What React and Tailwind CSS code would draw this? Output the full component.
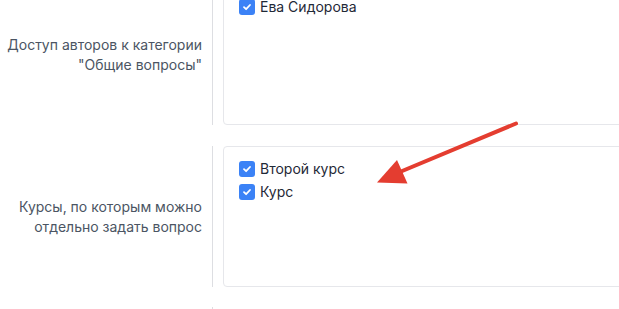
import React from "react";

function Check({ label }) {
  return (
    <div className="flex h-[23px] items-center gap-[5px]">
      <span className="flex h-4 w-4 items-center justify-center rounded-[3px] bg-[#3b82f6]">
        <svg width="10" height="10" viewBox="0 0 10 10" fill="none">
          <path d="M2 5.2 L4.1 7.2 L8 3" stroke="white" strokeWidth="1.8" strokeLinecap="round" strokeLinejoin="round" />
        </svg>
      </span>
      <span className="text-[14px] leading-5 text-[#1f2937]">{label}</span>
    </div>
  );
}

function Row({ label, items }) {
  return (
    <div className="flex h-[141px]">
      <div className="flex w-[212px] shrink-0 items-center justify-end pr-[10px] text-right text-[14px] leading-5 text-[#4b5563]">
        <div>{label}</div>
      </div>
      <div className="flex-1 border-l border-[#dddee2] pl-[10px]">
        <div className="h-full w-[500px] rounded-[4px] border border-[#e6e7eb] pl-[15px] pt-[10px]">
          {items.map((it) => (
            <Check key={it} label={it} />
          ))}
        </div>
      </div>
    </div>
  );
}

export default function App() {
  return (
    <div className="relative h-[309px] w-[619px] overflow-hidden bg-white font-['Inter',sans-serif]">
      <div className="-mt-[16px] flex flex-col gap-5">
        <Row
          label={
            <>
              Доступ авторов к категории
              <br />
              "Общие вопросы"
            </>
          }
          items={["Ева Сидорова"]}
        />
        <div className="mt-[1px]">
          <Row
            label={
              <>
                Курсы, по которым можно
                <br />
                отдельно задать вопрос
              </>
            }
            items={["Второй курс", "Курс"]}
          />
        </div>
        <div className="flex h-[20px]">
          <div className="w-[212px] shrink-0" />
          <div className="border-l border-[#dddee2]" />
        </div>
      </div>
      <svg className="absolute left-0 top-0" width="619" height="309" viewBox="0 0 619 309">
        <line x1="516" y1="123.5" x2="395" y2="174" stroke="#e43d30" strokeWidth="4" strokeLinecap="round" />
        <polygon points="377,182.5 397,160 407.5,183.5" fill="#e43d30" />
      </svg>
    </div>
  );
}
